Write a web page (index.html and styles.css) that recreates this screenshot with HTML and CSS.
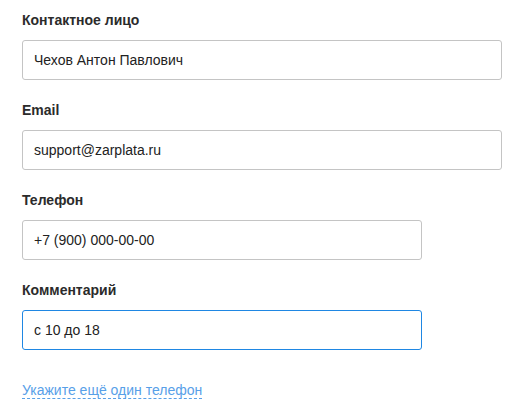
FILE: index.html
```html
<!DOCTYPE html>
<html lang="ru">
<head>
<meta charset="utf-8">
<link rel="stylesheet" href="styles.css">
</head>
<body>
<form class="form">
  <div class="field">
    <label class="label">Контактное лицо</label>
    <input class="input input-wide" type="text" value="Чехов Антон Павлович">
  </div>
  <div class="field">
    <label class="label">Email</label>
    <input class="input input-wide" type="text" value="support@zarplata.ru">
  </div>
  <div class="field">
    <label class="label">Телефон</label>
    <input class="input input-narrow" type="text" value="+7 (900) 000-00-00">
  </div>
  <div class="field">
    <label class="label">Комментарий</label>
    <input class="input input-narrow input-focus" type="text" value="с 10 до 18">
  </div>
  <div class="more">
    <span class="more-link">Укажите ещё один телефон</span>
  </div>
</form>
</body>
</html>
```

FILE: styles.css
```css
html, body {
  margin: 0;
  padding: 0;
  background: #ffffff;
}
body {
  font-family: "Liberation Sans", Arial, sans-serif;
  font-size: 14px;
  color: #222222;
}
.form {
  padding: 10px 22px 0;
  display: flex;
  flex-direction: column;
}
.field {
  display: flex;
  flex-direction: column;
  align-items: flex-start;
  margin-bottom: 20px;
}
.label {
  font-weight: bold;
  line-height: 20px;
  color: #2b2b2b;
  margin-bottom: 10px;
}
.input {
  box-sizing: border-box;
  height: 40px;
  border: 1px solid #c4c4c4;
  border-radius: 3px;
  padding: 0 11px;
  font-family: "Liberation Sans", Arial, sans-serif;
  font-size: 14px;
  color: #222222;
  background: #ffffff;
  outline: none;
  margin: 0;
}
.input-wide { width: 480px; }
.input-narrow { width: 400px; }
.input-focus { border-color: #1f87e3; }
.more {
  margin-top: 10px;
  line-height: 20px;
}
.more-link {
  color: #58a0e8;
  border-bottom: 1px dashed #58a0e8;
  cursor: pointer;
}
```
